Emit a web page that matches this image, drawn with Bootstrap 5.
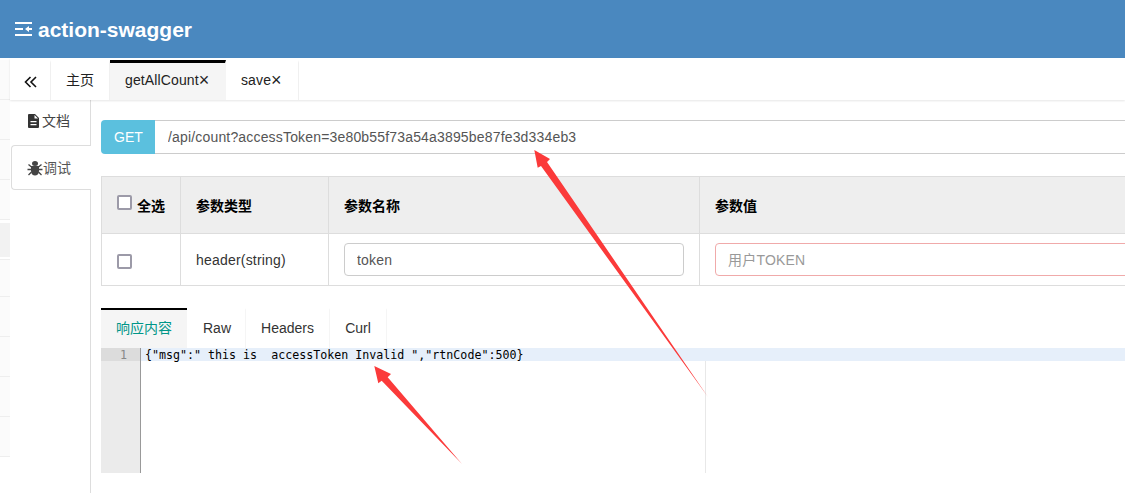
<!DOCTYPE html>
<html lang="zh">
<head>
<meta charset="utf-8">
<title>action-swagger</title>
<link href="https://cdn.jsdelivr.net/npm/bootstrap@5.3.0/dist/css/bootstrap.min.css" rel="stylesheet">
<style>
html,body{height:493px;overflow:hidden}
body{font-family:"Liberation Sans","Noto Sans CJK SC",sans-serif;font-size:14px;color:#333;background:#fff;position:relative}
.app-head{height:58px;background:#4a88bf;color:#fff;padding-left:15px;gap:5px}
.app-title{font-size:21px;font-weight:700;margin:0;line-height:1}
.stage{height:435px}
.edge-strip{width:10px;flex:none;padding-top:2px;background:#fff}
.edge-strip div{height:40px;background:#fbfbfb;border-bottom:1px solid #eee}
.edge-strip div.sel{background:#f2f2f2;background-clip:content-box;padding:3px 0 2px}
.edge-strip div.sm{height:37px}
.top-tabs{height:42px;padding-top:2px;box-shadow:0 1px 2px rgba(0,0,0,.1);position:relative;z-index:1;flex:none}
.top-tabs .nav-link{height:40px;padding:0 15px;line-height:41px;color:#222;border-right:1px solid #f0f0f0;border-top:3px solid transparent;white-space:nowrap;letter-spacing:.12px}
.top-tabs .nav-link span{display:block;margin-top:-3px}
.top-tabs .nav-link i{font-style:normal;font-size:18px;line-height:1;letter-spacing:0;vertical-align:-1px}
.top-tabs .nav-link.on{background:#f5f5f5;border-top-color:#000;border-right-color:#f5f5f5}
.top-tabs .tg{width:41px;padding:0 0 0 2px;display:flex;align-items:center;justify-content:center}
.top-tabs .home{width:59px}
.top-tabs .t1{width:116px}
.top-tabs .t2{width:73px}
.side-tabs{width:81px;flex:none;padding-left:1px;display:flex;flex-direction:column}
.side-tabs a{display:flex;align-items:center;color:#444;text-decoration:none;border-right:1px solid #ddd}
.side-tabs .s1{height:45px;padding:0 0 3px 17px;gap:3px}
.side-tabs .s2{height:45px;border:1px solid #ddd;border-right:0;border-radius:4px 0 0 4px;color:#555;background:#fff;padding:1px 0 0 15px;gap:0}
.side-rest{flex:1;border-right:1px solid #ddd}
.work{flex:1;overflow:hidden;padding:20px 0 0 10px}
.work-in{width:1100px}
.url-box{height:34px;margin-bottom:22px}
.url-box .verb{width:55px;background:#5bc0de;border:0;color:#fff;justify-content:center;border-radius:4px 0 0 4px;font-size:14px}
.url-box input{color:#555;border:1px solid #ccc;border-left:0;border-radius:0;font-size:14px;padding-left:13px;height:34px;letter-spacing:.17px}
.param-tbl{table-layout:fixed;width:1100px;margin:0;border-color:#ddd;color:#333}
.param-tbl th{background:#eee;height:57px;padding:2px 15px 0;vertical-align:middle;color:#000;font-weight:700;font-size:14px;box-shadow:none;white-space:nowrap}
.param-tbl td{height:52px;padding:0 15px 1px;vertical-align:middle;font-size:14px;letter-spacing:.2px}
.param-tbl td.low{padding-bottom:0;padding-top:1px}
.param-tbl .cbx{width:15px;height:15px;border:2px solid #9c9aa8;border-radius:2px;margin:0 5px 0 0;float:none;display:inline-block;vertical-align:1px}
.param-tbl td .cbx{vertical-align:-4px}
.param-tbl input.form-control{height:33px;font-size:14px;border-radius:4px;color:#555;padding:1px 12px 0;border-color:#ccc;letter-spacing:.2px}
.param-tbl input.bad{border-color:#f0aaaa}
.param-tbl input::placeholder{color:#999}
.res-tabs{margin-top:22px;height:41px}
.res-tabs .nav-link{height:40px;padding:0;text-align:center;line-height:36px;color:#333;border-right:1px solid #f5f5f5;border-top:2px solid transparent;white-space:nowrap}
.res-tabs .nav-link.on{background:#f5f5f5;color:#009688;border-top-color:#000;width:86px;border-right:0;margin-right:1px}
.res-tabs .w-raw{width:58px;padding-left:1px}
.res-tabs .w-head{width:84px}
.res-tabs .w-curl{width:57px}
.code-view{height:125px;margin-top:-1px;font-family:"DejaVu Sans Mono",monospace;font-size:11.65px;line-height:14px;color:#000}
.gutter{width:40px;background:#ebebeb;border-right:1px solid #999;flex:none;color:#888}
.gutter div{background:#dcdcdc;height:13px;text-align:right;padding-right:13px}
.code-main{flex:1;position:relative}
.code-line{height:13px;background:#e6effa;padding-left:4px;white-space:pre}
.print-mark{position:absolute;left:564px;top:13px;bottom:0;border-left:1px solid #e8e8e8}
.pointer-layer{position:absolute;left:0;top:0;width:1125px;height:493px;pointer-events:none;z-index:5}
</style>
</head>
<body>
<header class="app-head d-flex align-items-center">
  <svg width="18" height="15" viewBox="0 0 18 15" fill="#fff" aria-hidden="true"><rect x="0" y="0" width="17" height="2"/><rect x="0" y="6" width="8" height="2"/><rect x="0" y="12" width="17" height="2"/><path d="M10 7l4-3v2h3v2h-3v2z"/></svg>
  <h1 class="app-title">action-swagger</h1>
</header>
<div class="stage d-flex">
  <div class="edge-strip">
    <div></div><div></div><div></div><div></div><div class="sel"></div><div class="sm"></div><div></div><div></div><div></div><div></div>
  </div>
  <div class="flex-grow-1 d-flex flex-column" style="min-width:0">
    <ul class="nav top-tabs flex-nowrap">
      <li class="nav-item"><a class="nav-link tg" href="#"><svg width="14" height="12" viewBox="0 0 14 12" fill="none" stroke="#111" stroke-width="1.6" aria-hidden="true"><path d="M6.500 1L1.500 6l5 5M12 1L7 6l5 5"/></svg></a></li>
      <li class="nav-item"><a class="nav-link home" href="#"><span>主页</span></a></li>
      <li class="nav-item"><a class="nav-link on t1" href="#"><span>getAllCount<i>×</i></span></a></li>
      <li class="nav-item"><a class="nav-link t2" href="#"><span>save<i>×</i></span></a></li>
    </ul>
    <div class="flex-grow-1 d-flex" style="min-height:0">
      <nav class="side-tabs">
        <a class="s1" href="#"><svg width="11" height="14" viewBox="0 0 11 14" fill="#333" aria-hidden="true"><path d="M1 0h6l4 4v9a1 1 0 0 1-1 1H1a1 1 0 0 1-1-1V1a1 1 0 0 1 1-1zM2.500 7v1.300h6V7zM2.500 10v1.300h6V10zM6.500 1v3.500H10z" fill-rule="evenodd"/></svg><span>文档</span></a>
        <a class="s2" href="#"><svg width="16" height="16" viewBox="0 0 16 16" fill="#444" aria-hidden="true"><ellipse cx="8" cy="3.500" rx="3" ry="2.500"/><path d="M4 6h8v5c0 3-2 4.500-4 4.500S4 14 4 11z"/><path d="M1.500 4.500l3 2.500M14.500 4.500l-3 2.500M0.500 9.500h4M15.500 9.500h-4M1.500 15l3-3M14.500 15l-3-3" stroke="#444" stroke-width="1.300" fill="none"/></svg><span>调试</span></a>
        <div class="side-rest"></div>
      </nav>
      <main class="work">
        <div class="work-in">
          <div class="input-group url-box flex-nowrap">
            <span class="input-group-text verb">GET</span>
            <input class="form-control" type="text" value="/api/count?accessToken=3e80b55f73a54a3895be87fe3d334eb3" readonly>
          </div>
          <table class="table table-bordered param-tbl">
            <colgroup><col style="width:79px"><col style="width:148px"><col style="width:371px"><col></colgroup>
            <thead><tr>
              <th><span class="form-check-input cbx"></span>全选</th>
              <th>参数类型</th><th>参数名称</th><th>参数值</th>
            </tr></thead>
            <tbody><tr>
              <td class="low"><span class="form-check-input cbx"></span></td>
              <td class="low">header(string)</td>
              <td><input class="form-control" type="text" value="token" readonly></td>
              <td><input class="form-control bad" type="text" placeholder="用户TOKEN"></td>
            </tr></tbody>
          </table>
          <ul class="nav res-tabs">
            <li class="nav-item"><a class="nav-link on" href="#">响应内容</a></li>
            <li class="nav-item"><a class="nav-link w-raw" href="#">Raw</a></li>
            <li class="nav-item"><a class="nav-link w-head" href="#">Headers</a></li>
            <li class="nav-item"><a class="nav-link w-curl" href="#">Curl</a></li>
          </ul>
          <div class="code-view d-flex">
            <div class="gutter"><div>1</div></div>
            <div class="code-main">
              <div class="code-line">{"msg":" this is  accessToken Invalid ","rtnCode":500}</div>
              <div class="print-mark"></div>
            </div>
          </div>
        </div>
      </main>
    </div>
  </div>
</div>
<svg class="pointer-layer" viewBox="0 0 1125 493" aria-hidden="true">
  <polygon fill="#fb3a3a" points="534.300,150 550,159 547,162 708,397 541,166 537.700,167.700"/>
  <polygon fill="#fb3a3a" points="374.300,366 391,374 387.700,377.300 462,464 381.700,380.700 378.300,383.300"/>
</svg>
</body>
</html>
